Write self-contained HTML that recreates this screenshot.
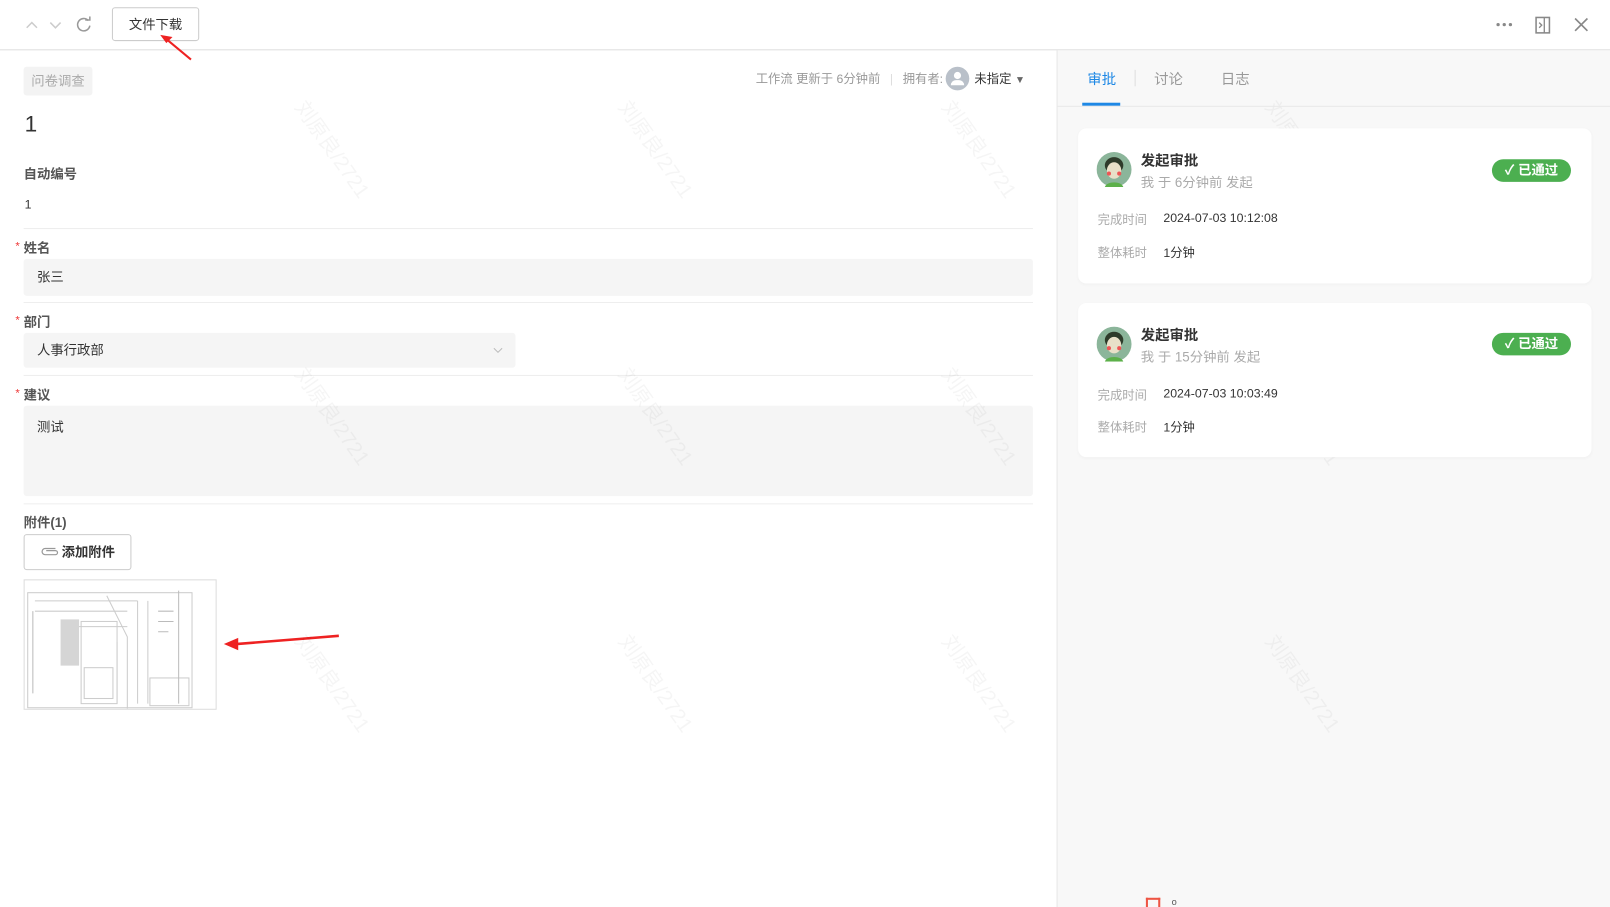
<!DOCTYPE html>
<html><head><meta charset="utf-8"><style>
*{box-sizing:border-box;margin:0;padding:0}
html,body{width:1610px;height:907px;overflow:hidden;background:#fff}
body{font-family:"Liberation Sans","Noto Sans CJK SC",sans-serif;color:#333}
#w{position:absolute;left:0;top:0;width:1568px;height:883px;transform:scale(1.02679,1.0272);transform-origin:0 0}
.a{position:absolute}
.lbl{position:absolute;left:23px;font-size:13px;font-weight:bold;color:#555}
.star{position:absolute;left:15px;color:#e33;font-size:11px}
.hr{position:absolute;left:23px;width:983px;height:1px;background:#eee}
.inp{position:absolute;left:23px;background:#f5f5f5;border-radius:3px;font-size:13px;color:#333;padding-left:13px}
.card{position:absolute;left:1050px;width:500px;background:#fff;border-radius:8px;box-shadow:0 1px 3px rgba(0,0,0,.03)}
.badge{position:absolute;right:20px;top:30px;width:77px;height:22px;background:#4caf50;border-radius:11px;color:#fff;font-size:13px;font-weight:bold;line-height:22px;text-align:center}
.wm{position:absolute;color:rgba(0,0,0,.04);font-size:20px;transform:rotate(55deg);white-space:nowrap}
</style></head><body><div id="w">
<div class="a" style="left:0;top:0;width:1568px;height:49px;border-bottom:1px solid #ddd;background:#fff"></div>
<svg class="a" style="left:24px;top:16px" width="70" height="16" fill="none" stroke-width="1.5"><path d="M2 11l5-5 5 5" stroke="#ccc"/><path d="M25 6l5 5 5-5" stroke="#ccc"/><path d="M62 4a6 6 0 1 0 1.5 5" stroke="#999"/><path d="M59 3.5h4.5v-3.5" stroke="#999"/></svg>
<div class="a" style="left:109px;top:7px;width:85px;height:33px;border:1px solid #ccc;border-radius:3px;font-size:13px;text-align:center;line-height:31px">文件下载</div>
<svg class="a" style="left:150px;top:30px" width="45" height="32"><path d="M36 28L12 8" stroke="#e22" stroke-width="2"/><path d="M6 4l12 2-6 6z" fill="#e22"/></svg>
<svg class="a" style="left:1456px;top:16px" width="100" height="18"><circle cx="3" cy="8" r="1.6" fill="#888"/><circle cx="9" cy="8" r="1.6" fill="#888"/><circle cx="15" cy="8" r="1.6" fill="#888"/><rect x="40" y="1" width="13" height="15" fill="none" stroke="#888" stroke-width="1.5"/><path d="M48 1v15M43 6l2.5 2.5L43 11" stroke="#888" stroke-width="1.3" fill="none"/><path d="M78 2l12 12M90 2L78 14" stroke="#888" stroke-width="1.6"/></svg>
<div class="a" style="left:1029px;top:49px;width:1px;height:834px;background:#e5e5e5"></div>
<div class="a" style="left:1030px;top:49px;width:538px;height:834px;background:#f8f8f8"></div>
<!-- left -->
<div class="a" style="left:23px;top:65px;width:67px;height:28px;background:#f3f3f3;border-radius:3px;font-size:13px;color:#aaa;text-align:center;line-height:28px">问卷调查</div>
<div class="a" style="left:736px;top:68px;font-size:12px;color:#999;white-space:nowrap">工作流 更新于 6分钟前 <span style="color:#ddd;margin:0 6px">|</span> 拥有者:</div>
<div class="a" style="left:921px;top:65px;width:23px;height:23px;border-radius:50%;background:#b9c0c9"></div>
<div class="a" style="left:929px;top:70px;width:7px;height:7px;border-radius:50%;background:#fff"></div>
<div class="a" style="left:926px;top:78px;width:13px;height:5px;border-radius:5px 5px 0 0;background:#fff"></div>
<div class="a" style="left:949px;top:68px;font-size:12px;color:#333">未指定 <span style="color:#666;font-size:10px">▼</span></div>
<div class="a" style="left:24px;top:108px;font-size:22px;color:#333">1</div>
<div class="lbl" style="top:159px">自动编号</div>
<div class="a" style="left:24px;top:192px;font-size:12px">1</div>
<div class="hr" style="top:222px"></div>
<div class="star" style="top:234px">*</div><div class="lbl" style="top:231px">姓名</div>
<div class="inp" style="top:252px;width:983px;height:36px;line-height:36px">张三</div>
<div class="hr" style="top:294px"></div>
<div class="star" style="top:306px">*</div><div class="lbl" style="top:303px">部门</div>
<div class="inp" style="top:324px;width:479px;height:34px;line-height:34px">人事行政部<svg class="a" style="right:12px;top:13px" width="10" height="8"><path d="M1 2l4 4 4-4" stroke="#bbb" fill="none"/></svg></div>
<div class="hr" style="top:365px"></div>
<div class="star" style="top:377px">*</div><div class="lbl" style="top:374px">建议</div>
<div class="inp" style="top:395px;width:983px;height:88px;padding-top:10px">测试</div>
<div class="hr" style="top:490px"></div>
<div class="lbl" style="top:498px">附件(1)</div>
<div class="a" style="left:23px;top:520px;width:105px;height:35px;border:1px solid #ccc;border-radius:3px;font-size:13px;font-weight:bold;line-height:33px;padding-left:36px">添加附件</div>
<svg class="a" style="left:39px;top:532px" width="18" height="10"><path d="M15 2H5a3 3 0 0 0 0 6h10a2 2 0 0 0 0-4H6" stroke="#999" fill="none" stroke-width="1.2"/></svg>
<div class="a" style="left:23px;top:564px;width:188px;height:127px;border:1px solid #ddd;background:#fff;overflow:hidden">
<svg width="188" height="127" fill="none"><rect x="3" y="12" width="160" height="112" stroke="#ccc"/><path d="M10 20h100M10 30h90M40 45h60M80 15l20 40v70M110 20v100M90 60v60M120 20v100" stroke="#ccc"/><rect x="35" y="38" width="18" height="45" fill="#d5d5d5"/><rect x="55" y="40" width="35" height="80" stroke="#ccc"/><rect x="58" y="85" width="28" height="30" stroke="#ccc"/><rect x="122" y="95" width="38" height="27" stroke="#ccc"/><path d="M8 30v80M150 10v110M130 30h15M130 40h15M130 50h10" stroke="#bbb"/></svg></div>
<svg class="a" style="left:215px;top:615px" width="120" height="20"><path d="M115 4L15 12" stroke="#e22" stroke-width="2.5"/><path d="M3 12l14-6v12z" fill="#e22"/></svg>
<!-- watermarks -->
<div class="wm" style="left:270px;top:130px">刘原良/2721</div><div class="wm" style="left:585px;top:130px">刘原良/2721</div><div class="wm" style="left:900px;top:130px">刘原良/2721</div><div class="wm" style="left:1215px;top:130px">刘原良/2721</div>
<div class="wm" style="left:270px;top:390px">刘原良/2721</div><div class="wm" style="left:585px;top:390px">刘原良/2721</div><div class="wm" style="left:900px;top:390px">刘原良/2721</div><div class="wm" style="left:1215px;top:390px">刘原良/2721</div>
<div class="wm" style="left:270px;top:650px">刘原良/2721</div><div class="wm" style="left:585px;top:650px">刘原良/2721</div><div class="wm" style="left:900px;top:650px">刘原良/2721</div><div class="wm" style="left:1215px;top:650px">刘原良/2721</div>
<!-- right -->
<div class="a" style="left:1059px;top:67px;font-size:14px;color:#1e88e5">审批</div>
<div class="a" style="left:1105px;top:68px;width:1px;height:16px;background:#ddd"></div>
<div class="a" style="left:1124px;top:67px;font-size:14px;color:#999">讨论</div>
<div class="a" style="left:1189px;top:67px;font-size:14px;color:#999">日志</div>
<div class="a" style="left:1054px;top:100px;width:37px;height:3px;background:#1e88e5"></div>
<div class="a" style="left:1030px;top:103px;width:538px;height:1px;background:#e8e8e8"></div>
<div class="card" style="top:125px;height:151px">
<svg class="a" style="left:18px;top:23px" width="34" height="34"><circle cx="17" cy="17" r="17" fill="#8bb59a"/><ellipse cx="17" cy="13" rx="9" ry="8" fill="#2e3b2a"/><ellipse cx="17" cy="18" rx="7" ry="8" fill="#e8e0c8"/><path d="M8 34c2-6 16-6 18 0z" fill="#5cb04a"/><circle cx="12" cy="21" r="2" fill="#e55"/><circle cx="22" cy="21" r="2" fill="#e55"/></svg>
<div class="a" style="left:61px;top:21px;font-size:14px;font-weight:bold;color:#333">发起审批</div>
<div class="a" style="left:61px;top:42px;font-size:13px;color:#aaa">我 于 6分钟前 发起</div>
<div class="badge">✓ 已通过</div>
<div class="a" style="left:19px;top:80px;font-size:12px;color:#aaa">完成时间</div><div class="a" style="left:83px;top:80px;font-size:12px;color:#333">2024-07-03 10:12:08</div>
<div class="a" style="left:19px;top:112px;font-size:12px;color:#aaa">整体耗时</div><div class="a" style="left:83px;top:112px;font-size:12px;color:#333">1分钟</div>
</div>
<div class="card" style="top:295px;height:150px">
<svg class="a" style="left:18px;top:23px" width="34" height="34"><circle cx="17" cy="17" r="17" fill="#8bb59a"/><ellipse cx="17" cy="13" rx="9" ry="8" fill="#2e3b2a"/><ellipse cx="17" cy="18" rx="7" ry="8" fill="#e8e0c8"/><path d="M8 34c2-6 16-6 18 0z" fill="#5cb04a"/><circle cx="12" cy="21" r="2" fill="#e55"/><circle cx="22" cy="21" r="2" fill="#e55"/></svg>
<div class="a" style="left:61px;top:21px;font-size:14px;font-weight:bold;color:#333">发起审批</div>
<div class="a" style="left:61px;top:42px;font-size:13px;color:#aaa">我 于 15分钟前 发起</div>
<div class="badge" style="top:29px">✓ 已通过</div>
<div class="a" style="left:19px;top:81px;font-size:12px;color:#aaa">完成时间</div><div class="a" style="left:83px;top:81px;font-size:12px;color:#333">2024-07-03 10:03:49</div>
<div class="a" style="left:19px;top:112px;font-size:12px;color:#aaa">整体耗时</div><div class="a" style="left:83px;top:112px;font-size:12px;color:#333">1分钟</div>
</div>
<div class="a" style="left:1116px;top:874px;width:14px;height:9px;border:2px solid #e54;border-bottom:none"></div>
<div class="a" style="left:1141px;top:873px;font-size:9px;color:#555">o</div>
</div></body></html>
